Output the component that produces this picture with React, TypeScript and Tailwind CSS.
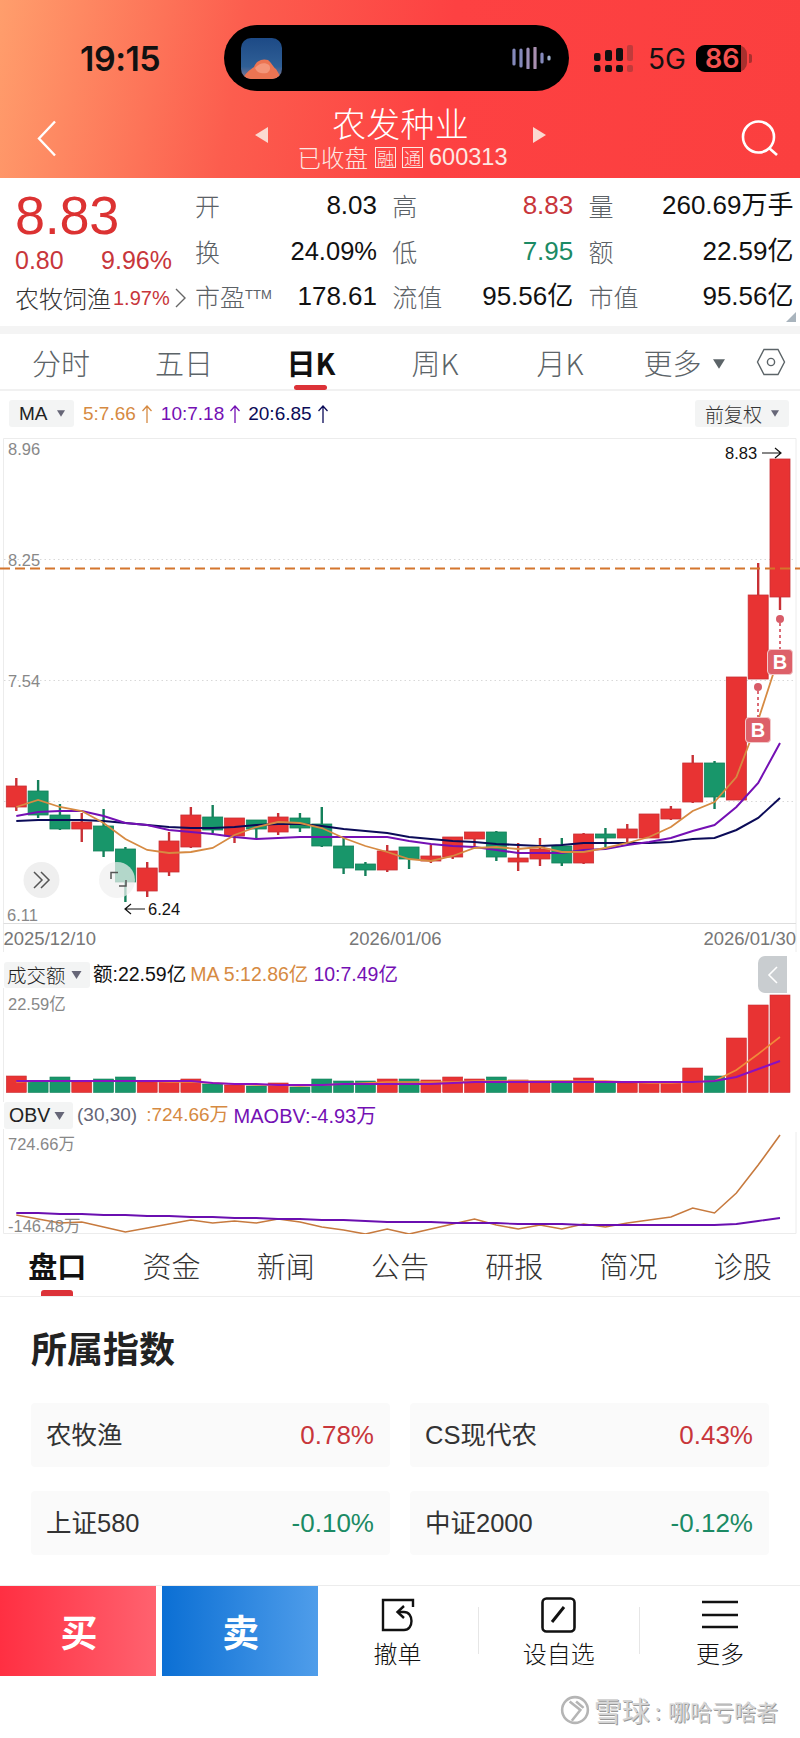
import React from 'react';

const RED = '#e83333';
const GREEN = '#18966a';
const ORANGE = '#d68a42';
const PURPLE = '#7410b4';
const NAVY = '#0b0b58';

const xAt = (i: number) => 16.3 + i * 21.82;

// r/g, body top, body bottom, wick top, wick bottom (page y)
const candles: [string, number, number, number, number][] = [
  ['r', 786, 807, 778, 811],
  ['g', 791, 815, 780, 818],
  ['g', 815, 829, 804, 830],
  ['r', 822, 829, 813, 842],
  ['g', 826, 851, 809, 857],
  ['g', 849, 882, 847, 902],
  ['r', 868, 891, 862, 897],
  ['r', 841, 872, 832, 876],
  ['r', 815, 847, 807, 848],
  ['g', 817, 830, 805, 833],
  ['r', 818, 836, 818, 843],
  ['g', 820, 829, 820, 838],
  ['r', 817, 832, 813, 835],
  ['g', 818, 828, 813, 832],
  ['g', 824, 846, 807, 847],
  ['g', 846, 868, 838, 874],
  ['g', 864, 870, 862, 876],
  ['r', 851, 870, 845, 872],
  ['g', 847, 859, 847, 869],
  ['r', 856, 861, 845, 863],
  ['r', 837, 857, 837, 859],
  ['r', 832, 839, 832, 846],
  ['g', 832, 857, 831, 861],
  ['r', 858, 862, 843, 871],
  ['r', 849, 859, 838, 866],
  ['g', 846, 863, 838, 866],
  ['r', 834, 863, 833, 864],
  ['g', 834, 838, 828, 847],
  ['r', 829, 838, 824, 842],
  ['r', 814, 838, 814, 838],
  ['r', 809, 819, 806, 820],
  ['r', 763, 802, 755, 803],
  ['g', 763, 797, 761, 809],
  ['r', 677, 800, 677, 800],
  ['r', 595, 679, 563, 679],
  ['r', 459, 597, 459, 610],
];

const ma5 = [807, 800, 807, 811, 823, 839, 850, 853, 852, 848, 835, 827, 822, 823, 828, 838, 846, 852, 859, 861, 856, 848, 847, 849, 847, 852, 852, 848, 843, 837, 827, 811, 802, 777, 720, 653];
const ma10 = [816, 812, 811, 811, 816, 823, 825, 830, 832, 834, 837, 839, 838, 837, 837, 837, 837, 837, 841, 844, 846, 847, 850, 853, 853, 853, 850, 849, 845, 842, 838, 831, 825, 807, 783, 743];
const ma20 = [821, 820, 820, 820, 821, 823, 825, 827, 828, 828, 827, 825, 824, 824, 826, 829, 831, 833, 837, 839, 841, 842, 844, 845, 846, 845, 843, 843, 843, 843, 842, 839, 838, 830, 818, 798];

const volTops = [1076, 1081, 1077, 1082, 1079, 1077, 1082, 1081, 1079, 1084, 1085, 1086, 1083, 1087, 1079, 1081, 1081, 1079, 1079, 1080, 1077, 1079, 1077, 1080, 1081, 1081, 1078, 1082, 1083, 1083, 1082, 1068, 1076, 1038, 1005, 995];
const volMa5 = [1082, 1081, 1081, 1081, 1081, 1081, 1081, 1082, 1082, 1083, 1084, 1085, 1085, 1086, 1085, 1084, 1083, 1082, 1082, 1082, 1082, 1081, 1081, 1081, 1081, 1081, 1081, 1081, 1082, 1083, 1083, 1082, 1081, 1070, 1054, 1037];
const volMa10 = [1081, 1081, 1081, 1081, 1081, 1081, 1081, 1081, 1081, 1083, 1084, 1084, 1085, 1085, 1085, 1084, 1084, 1084, 1084, 1084, 1083, 1082, 1082, 1082, 1082, 1082, 1082, 1082, 1082, 1082, 1082, 1082, 1081, 1077, 1069, 1061];

const obv = [1215, 1219, 1223, 1222, 1227, 1232, 1228, 1224, 1220, 1223, 1221, 1223, 1219, 1222, 1227, 1230, 1234, 1229, 1234, 1229, 1224, 1219, 1225, 1229, 1225, 1229, 1224, 1227, 1223, 1220, 1217, 1208, 1213, 1193, 1165, 1135];
const maObv = [1213, 1213, 1214, 1214, 1215, 1215, 1216, 1216, 1217, 1217, 1218, 1218, 1219, 1219, 1220, 1220, 1221, 1222, 1222, 1222, 1223, 1223, 1223, 1224, 1224, 1224, 1225, 1225, 1225, 1225, 1225, 1225, 1225, 1224, 1221, 1218];

const pts = (ys: number[]) => ys.map((y, i) => `${xAt(i).toFixed(1)},${y}`).join(' ');

const indexCards = [
  { name: '农牧渔', value: '0.78%', up: true },
  { name: 'CS现代农', value: '0.43%', up: true },
  { name: '上证580', value: '-0.10%', up: false },
  { name: '中证2000', value: '-0.12%', up: false },
];

function Caret({ className }: { className: string }) {
  return (
    <svg viewBox="0 0 10 8" className={className}>
      <path d="M0 0H10L5 8Z" fill="currentColor" />
    </svg>
  );
}

function UpArrow({ color }: { color: string }) {
  return (
    <svg width="12" height="18" viewBox="0 0 12 18" className="ml-[5px]" fill="none" stroke={color} strokeWidth="1.3">
      <path d="M6 1V18M1.5 6L6 1L10.5 6" />
    </svg>
  );
}

function StatusBar() {
  return (
    <div className="flex h-[91px] items-start pt-[25px]">
      <div className="ml-[80px] mt-[15px] w-[144px] text-[34px] font-semibold leading-[38px] tracking-[-0.5px] text-[#111] [font-family:Inter,sans-serif]">19:15</div>
      <div className="flex h-[66px] w-[345px] items-center rounded-[33px] bg-black pl-[17px]">
        <svg width="41" height="41" viewBox="0 0 41 41" className="rounded-[10px]">
          <defs>
            <linearGradient id="sky" x1="0" y1="0" x2="0" y2="1">
              <stop offset="0" stopColor="#1d4a86" />
              <stop offset="0.7" stopColor="#2f5f96" />
              <stop offset="1" stopColor="#8a7a90" />
            </linearGradient>
          </defs>
          <rect width="41" height="41" fill="url(#sky)" />
          <path d="M2 41C5 34 9 32 13 29C15 23 21 20 27 22C31 25 32 29 35 31C37 34 39 38 40 41Z" fill="#ec7452" />
          <path d="M14 30C18 25 24 24 28 27C30 30 29 33 26 35C21 36 16 35 14 30Z" fill="#f4967a" />
        </svg>
        <svg width="40" height="22" viewBox="0 0 40 22" className="ml-[230px]">
          <g strokeWidth="3.2" strokeLinecap="round" stroke="#8489bb">
            <path d="M2 3V17" />
            <path d="M9 3V19" />
            <path d="M16 2V21" stroke="#9c8fb8" />
            <path d="M23 1V21" stroke="#a98fb0" />
            <path d="M30 7V15" stroke="#8489bb" />
            <path d="M37 10V12" stroke="#9fb0cc" />
          </g>
        </svg>
      </div>
      <svg width="40" height="28" viewBox="0 0 40 28" className="ml-[25px] mt-[20px]">
        <g fill="#111">
          <rect x="0" y="8" width="6.5" height="8" rx="2" />
          <rect x="11" y="5" width="7" height="11" rx="2" />
          <rect x="22" y="3" width="7" height="13" rx="2" />
          <rect x="0" y="20" width="6.5" height="7" rx="2" />
          <rect x="11" y="20" width="7" height="7" rx="2" />
          <rect x="22" y="20" width="7" height="7" rx="2" />
        </g>
        <g fill="#b23a3a" opacity="0.8">
          <rect x="33" y="0" width="6" height="16" rx="2" />
          <rect x="33" y="20" width="6" height="7" rx="2" />
        </g>
      </svg>
      <div className="ml-[14px] mr-[10px] mt-[18px] whitespace-nowrap text-[28px] font-normal leading-[32px] text-[#111] [font-family:Inter,sans-serif]">5G</div>
      <div className="relative mt-[20px] flex h-[27px] w-[51px] rounded-[9px] bg-[#a8302e]">
        <div className="w-[45px] rounded-l-[9px] bg-black pl-[9px] text-[27px] font-semibold leading-[27px] text-[#f4524f] [font-family:Inter,sans-serif]">86</div>
      </div>
      <div className="ml-[2px] mt-[29px] h-[9px] w-[3px] rounded-r-[2px] bg-[#a8302e]" />
    </div>
  );
}

function NavBar() {
  return (
    <div className="flex h-[87px] items-start">
      <svg width="20" height="37" viewBox="0 0 20 37" className="ml-[37px] mt-[29px]">
        <path d="M18 1.5L2 18.5L18 35.5" fill="none" stroke="#fff" strokeWidth="2.4" />
      </svg>
      <svg width="13" height="16" viewBox="0 0 13 16" className="ml-[198px] mt-[36px]">
        <path d="M13 0V16L0 8Z" fill="#fbd9d0" />
      </svg>
      <div className="flex w-[265px] flex-col items-center pt-[13px] text-white">
        <div className="text-[34px] leading-[38px] tracking-[0.3px] [font-family:'Noto_Sans_CJK_SC',sans-serif] font-light">农发种业</div>
        <div className="ml-[4px] flex items-center text-[23.5px] leading-[30px] text-[#fde8e3]">
          <span className="[font-family:'Noto_Sans_CJK_SC',sans-serif] font-light">已收盘</span>
          <span className="ml-[7px] flex h-[21px] w-[21px] items-center justify-center border border-[#fde8e3] text-[17px] leading-none [font-family:'Noto_Sans_CJK_SC',sans-serif] font-light">融</span>
          <span className="ml-[6px] flex h-[21px] w-[21px] items-center justify-center border border-[#fde8e3] text-[17px] leading-none [font-family:'Noto_Sans_CJK_SC',sans-serif] font-light">通</span>
          <span className="ml-[6px]">600313</span>
        </div>
      </div>
      <svg width="13" height="16" viewBox="0 0 13 16" className="mt-[36px]">
        <path d="M0 0V16L13 8Z" fill="#fbd9d0" />
      </svg>
      <svg width="38" height="36" viewBox="0 0 38 36" className="ml-[195px] mt-[29px]">
        <circle cx="17.5" cy="17" r="15.5" fill="none" stroke="#fff" strokeWidth="2.6" />
        <path d="M28 28L36 35" stroke="#fff" strokeWidth="2.6" />
      </svg>
    </div>
  );
}

function QuotePair({ label, value, tone, sup }: { label: string; value: string; tone?: string; sup?: boolean }) {
  return (
    <div className="flex items-center justify-between leading-[30px]">
      <span className="text-[25px] text-[#5b6166] [font-family:'Noto_Sans_CJK_SC',sans-serif] font-light">
        {label}
        {sup && <sup className="top-[-8px] text-[13px] [font-family:'Liberation_Sans',sans-serif]">TTM</sup>}
      </span>
      <span className={tone ?? 'text-[26px] text-[#111]'}>{value}</span>
    </div>
  );
}

function Quote() {
  return (
    <div className="relative flex h-[148px] bg-white">
      <div className="w-[195px] pl-[15px] pt-[10px]">
        <div className="text-[54px] leading-[54px] tracking-[-0.3px] text-[#dc3232]">8.83</div>
        <div className="mt-[4px] flex h-[30px] w-[157px] items-center justify-between text-[25px] text-[#c8363b]">
          <span>0.80</span>
          <span>9.96%</span>
        </div>
        <div className="mt-[7px] flex h-[30px] items-center text-[24px] text-[#333]">
          <span className="[font-family:'Noto_Sans_CJK_SC',sans-serif] font-light">农牧饲渔</span>
          <span className="ml-[2px] text-[20px] text-[#c8363b]">1.97%</span>
          <svg width="11" height="22" viewBox="0 0 11 22" className="ml-[5px]">
            <path d="M1 2L10 11L1 20" fill="none" stroke="#666" strokeWidth="1.4" />
          </svg>
        </div>
      </div>
      <div className="grid grid-cols-[182px_181px_205px] auto-rows-[45.5px] items-center gap-x-[15.25px] pt-[4.5px]">
        <QuotePair label="开" value="8.03" />
        <QuotePair label="高" value="8.83" tone="text-[26px] text-[#c8363b]" />
        <QuotePair label="量" value="260.69万手" />
        <QuotePair label="换" value="24.09%" tone="text-[25.5px] text-[#111]" />
        <QuotePair label="低" value="7.95" tone="text-[26px] text-[#1b8a64]" />
        <QuotePair label="额" value="22.59亿" />
        <QuotePair label="市盈" value="178.61" sup />
        <QuotePair label="流值" value="95.56亿" />
        <QuotePair label="市值" value="95.56亿" />
      </div>
      <svg width="10" height="10" viewBox="0 0 10 10" className="absolute bottom-[4px] right-[4px]">
        <path d="M10 0V10H0Z" fill="#a9b4bd" />
      </svg>
    </div>
  );
}

function PeriodTabs() {
  const base = "flex items-center justify-center pt-[1px] text-[#5c6468] [font-family:'Noto_Sans_CJK_SC',sans-serif] font-light";
  return (
    <div className="relative grid h-[57px] grid-cols-[122px_124px_130px_118px_132px_116px_58px] border-b-2 border-[#f1f1f1] text-[29px] leading-none">
      <div className={base}>分时</div>
      <div className={base}>五日</div>
      <div className="flex items-center justify-center pt-[1px] font-bold text-[#111] [font-family:'Noto_Sans_CJK_SC',sans-serif]">日K</div>
      <div className={base}>周K</div>
      <div className={base}>月K</div>
      <div className={base}>
        更多
        <Caret className="ml-[11px] mt-[3px] h-[10px] w-[12px] text-[#5c6468]" />
      </div>
      <div className="flex items-center justify-center">
        <svg width="30" height="28" viewBox="0 0 30 28">
          <path d="M8 1.5H22L28.5 14L22 26.5H8L1.5 14Z" fill="none" stroke="#5c6468" strokeWidth="1.4" />
          <circle cx="15" cy="14" r="3.6" fill="none" stroke="#5c6468" strokeWidth="1.4" />
        </svg>
      </div>
      <div className="absolute bottom-[-1px] left-[294px] h-[5px] w-[33px] rounded-full bg-[#dc3238]" />
    </div>
  );
}

function MaBar() {
  return (
    <div className="flex h-[47px] items-start pt-[9px] text-[19px] leading-[27px]">
      <div className="ml-[9px] flex h-[27px] w-[65px] items-center rounded-[3px] bg-[#f3f4f4] pl-[10px] text-[#222]">
        MA
        <Caret className="ml-[9px] h-[7px] w-[8px] text-[#667]" />
      </div>
      <div className="ml-[9px] flex h-[27px] items-center text-[#d68a42]">
        5:7.66
        <UpArrow color={ORANGE} />
      </div>
      <div className="ml-[8px] flex h-[27px] items-center text-[#7410b4]">
        10:7.18
        <UpArrow color={PURPLE} />
      </div>
      <div className="ml-[7px] flex h-[27px] items-center text-[#0b0b58]">
        20:6.85
        <UpArrow color={NAVY} />
      </div>
      <div className="ml-auto mr-[11px] flex h-[27px] w-[94px] items-center rounded-[3px] bg-[#f3f4f4] pl-[10px] text-[#333]">
        <span className="[font-family:'Noto_Sans_CJK_SC',sans-serif] font-light">前复权</span>
        <Caret className="ml-[9px] h-[7px] w-[8px] text-[#667]" />
      </div>
    </div>
  );
}

function TradeBadge({ className }: { className: string }) {
  return (
    <div className={`absolute flex h-[26px] w-[26px] items-center justify-center rounded-[4px] border border-[#f3c9cb] bg-[#dd6069] text-[20px] font-bold leading-none text-white ${className}`}>
      B
    </div>
  );
}

function MainChart() {
  return (
    <div className="relative h-[514px] text-[16.5px] leading-[20px]">
      <svg width="800" height="514" viewBox="0 438 800 514" className="block">
        <path d="M3.5 952.5V438.5H796V952.5H3.5" fill="none" stroke="#ececec" />
        <path d="M3.5 923.5H796" stroke="#dedede" />
        {[559.5, 680.5, 801.5].map((y) => (
          <path key={y} d={`M4 ${y}H796`} stroke="#d8d8d8" strokeDasharray="1.5 3" />
        ))}
        {candles.map(([c, top, bottom, wickTop, wickBottom], i) => {
          const x = xAt(i);
          const fill = c === 'r' ? RED : GREEN;
          const dark = c === 'r' ? '#c83035' : '#14805a';
          return (
            <g key={i}>
              <path d={`M${x} ${wickTop}V${wickBottom}`} stroke={dark} strokeWidth="2.4" />
              <rect x={x - 10} y={top} width="20" height={bottom - top} fill={fill} stroke={dark} strokeWidth="0.8" />
            </g>
          );
        })}
        <path d="M0 568.5H800" stroke="#d4752c" strokeWidth="2" strokeDasharray="10 5" />
        <polyline points={pts(ma20)} fill="none" stroke={NAVY} strokeWidth="2" />
        <polyline points={pts(ma10)} fill="none" stroke={PURPLE} strokeWidth="2" />
        <polyline points={pts(ma5)} fill="none" stroke={ORANGE} strokeWidth="1.8" />
        <path d="M780 623V649M758 691V717" stroke="#d85c68" strokeWidth="1.8" strokeDasharray="3 3" />
        <circle cx="780" cy="619" r="4" fill="#d85c68" />
        <circle cx="758" cy="687" r="4" fill="#d85c68" />
        <path d="M762 453H781M775 448L781 453L775 458" fill="none" stroke="#111" strokeWidth="1.2" />
        <path d="M145 909H125M131 904L125 909L131 914" fill="none" stroke="#111" strokeWidth="1.2" />
        <circle cx="41.5" cy="880" r="18" fill="#efefef" />
        <path d="M34 872L42 880L34 888M41 872L49 880L41 888" fill="none" stroke="#555" strokeWidth="1.5" />
        <circle cx="117" cy="880" r="18" fill="#f0f0f0" fillOpacity="0.72" />
        <path d="M111 879V872.5H118M126 880V886H119" fill="none" stroke="#555" strokeWidth="1.5" />
      </svg>
      <TradeBadge className="left-[767px] top-[211px]" />
      <TradeBadge className="left-[745px] top-[279px]" />
      <div className="absolute left-[8px] top-[1px] text-[#888]">8.96</div>
      <div className="absolute left-[8px] top-[112px] text-[#888]">8.25</div>
      <div className="absolute left-[8px] top-[233px] text-[#888]">7.54</div>
      <div className="absolute left-[7px] top-[467px] text-[#888]">6.11</div>
      <div className="absolute left-[725px] top-[5px] text-[#111]">8.83</div>
      <div className="absolute left-[148px] top-[461px] text-[#111]">6.24</div>
      <div className="absolute left-[3.5px] top-[491px] text-[18.5px] text-[#777]">2025/12/10</div>
      <div className="absolute left-[349px] top-[491px] text-[18.5px] text-[#777]">2026/01/06</div>
      <div className="absolute right-[4px] top-[491px] text-[18.5px] text-[#777]">2026/01/30</div>
    </div>
  );
}

function VolumePanel() {
  return (
    <div className="relative h-[150px] pt-[10px]">
      <div className="flex h-[26px] items-center text-[19.5px]">
        <div className="ml-[4px] flex h-[26px] w-[86px] items-center rounded-[3px] bg-[#f3f4f4] pl-[3px] text-[#222]">
          <span className="[font-family:'Noto_Sans_CJK_SC',sans-serif] font-light">成交额</span>
          <Caret className="ml-[5px] h-[8px] w-[11px] text-[#667]" />
        </div>
        <span className="ml-[3px] text-[#111]">额:22.59亿</span>
        <span className="ml-[4px] text-[#d68a42]">MA 5:12.86亿</span>
        <span className="ml-[5px] text-[#7410b4]">10:7.49亿</span>
      </div>
      <svg width="800" height="114" viewBox="0 988 800 114" className="block">
        <path d="M3.5 988V1102" stroke="#ececec" />
        {volTops.map((top, i) => (
          <rect key={i} x={xAt(i) - 10} y={top} width="20" height={1092.5 - top} fill={candles[i][0] === 'r' ? RED : GREEN} stroke={candles[i][0] === 'r' ? '#c83035' : '#14805a'} strokeWidth="0.6" />
        ))}
        <polyline points={pts(volMa5)} fill="none" stroke="#f08a3a" strokeWidth="1.6" />
        <polyline points={pts(volMa10)} fill="none" stroke="#8a10c0" strokeWidth="2" />
      </svg>
      <div className="absolute left-[8px] top-[42px] text-[16.5px] leading-[20px] text-[#888]">22.59亿</div>
      <div className="absolute left-[758px] top-[4px] flex h-[37px] w-[29px] items-center justify-center rounded-l-[7px] bg-[#c9cdd0]">
        <svg width="12" height="20" viewBox="0 0 12 20">
          <path d="M10 2L2 10L10 18" fill="none" stroke="#fff" strokeWidth="1.6" />
        </svg>
      </div>
    </div>
  );
}

function ObvPanel() {
  return (
    <div className="relative h-[132px]">
      <div className="flex h-[27px] items-center text-[19px]">
        <div className="ml-[4px] flex h-[27px] w-[69px] items-center rounded-[3px] bg-[#f3f4f4] pl-[5px] text-[19.5px] text-[#222]">
          OBV
          <Caret className="ml-[4px] h-[8px] w-[11px] text-[#667]" />
        </div>
        <span className="ml-[4px] text-[#667]">(30,30)</span>
        <span className="ml-[9px] text-[#d68a42]">:724.66万</span>
        <span className="ml-[5px] text-[20px] text-[#7410b4]">MAOBV:-4.93万</span>
      </div>
      <svg width="800" height="105" viewBox="0 1129 800 105" className="block">
        <path d="M3.5 1129V1233.5H796V1132" fill="none" stroke="#ececec" />
        <polyline points={pts(obv)} fill="none" stroke="#c77a3e" strokeWidth="1.6" />
        <polyline points={pts(maObv)} fill="none" stroke="#6a0fb0" strokeWidth="1.8" />
      </svg>
      <div className="absolute left-[8px] top-[32px] text-[16.5px] leading-[20px] text-[#888]">724.66万</div>
      <div className="absolute left-[8px] top-[114px] text-[16.5px] leading-[20px] text-[#888]">-146.48万</div>
    </div>
  );
}

function InfoTabs() {
  const tabs = ['盘口', '资金', '新闻', '公告', '研报', '简况', '诊股'];
  return (
    <div className="relative grid h-[63px] grid-cols-7 border-b border-[#eeeeee] text-[29px] [font-family:'Noto_Sans_CJK_SC',sans-serif]">
      {tabs.map((t, i) => (
        <div key={t} className={i === 0 ? 'flex items-center justify-center pt-[1px] font-bold text-[#111]' : 'flex items-center justify-center pt-[1px] font-light text-[#333]'}>
          {t}
        </div>
      ))}
      <div className="absolute bottom-0 left-[41px] h-[6px] w-[32px] rounded-t-[3px] bg-[#dc3238]" />
    </div>
  );
}

function IndexSection() {
  return (
    <div className="h-[288px] px-[31px]">
      <div className="pt-[26px] text-[36px] font-bold leading-[48px] text-[#222] [font-family:'Noto_Sans_CJK_SC',sans-serif]">所属指数</div>
      <div className="mt-[32px] grid grid-cols-[359px_359px] auto-rows-[64px] gap-x-[20px] gap-y-[24px]">
        {indexCards.map((c) => (
          <div key={c.name} className="flex items-center justify-between rounded-[4px] bg-[#fafafa] pl-[15px] pr-[16px]">
            <span className="text-[25.5px] text-[#333] [font-family:'Liberation_Sans','Noto_Sans_CJK_SC',sans-serif]">{c.name}</span>
            <span className={c.up ? 'text-[26px] text-[#c8363b]' : 'text-[26px] text-[#1b8a64]'}>{c.value}</span>
          </div>
        ))}
      </div>
    </div>
  );
}

function ToolButton({ label, children }: { label: string; children: React.ReactNode }) {
  return (
    <div className="flex flex-1 flex-col items-center pt-[11px]">
      <div className="flex h-[36px] items-center">{children}</div>
      <div className="mt-[5px] text-[24px] leading-[30px] text-[#111] [font-family:'Noto_Sans_CJK_SC',sans-serif] font-light">{label}</div>
    </div>
  );
}

function BottomBar() {
  return (
    <div className="flex h-[91px] border-t border-[#ececec]">
      <div className="flex w-[156px] items-center justify-center bg-[linear-gradient(90deg,#ff2f42,#ff626f)] pl-[2px] pt-[2px] text-[37px] font-bold text-white [font-family:'Noto_Sans_CJK_SC',sans-serif]">买</div>
      <div className="ml-[6px] flex w-[155.5px] items-center justify-center bg-[linear-gradient(90deg,#0b6fd4,#4f9dea)] pl-[2px] pt-[2px] text-[37px] font-bold text-white [font-family:'Noto_Sans_CJK_SC',sans-serif]">卖</div>
      <ToolButton label="撤单">
        <svg width="34" height="34" viewBox="0 0 34 34" fill="none" stroke="#111" strokeWidth="2.4">
          <path d="M32 9V2H2V32H23" />
          <path d="M17 14H23C33 14 33 32 23 32" />
          <path d="M23 8L16.5 14L23 20" />
        </svg>
      </ToolButton>
      <div className="mt-[21px] h-[47px] w-px bg-[#e6e6e6]" />
      <ToolButton label="设自选">
        <svg width="35" height="36" viewBox="0 0 35 36" fill="none" stroke="#111">
          <rect x="1.5" y="1.5" width="32" height="33" rx="4" strokeWidth="2.6" />
          <path d="M11 25L23 10" strokeWidth="3" />
        </svg>
      </ToolButton>
      <div className="mt-[21px] h-[47px] w-px bg-[#e6e6e6]" />
      <ToolButton label="更多">
        <svg width="36" height="30" viewBox="0 0 36 30" stroke="#111" strokeWidth="2.6">
          <path d="M0 2H36M0 15H36M0 27H36" />
        </svg>
      </ToolButton>
    </div>
  );
}

function Watermark() {
  return (
    <div className="flex h-[62px] items-center justify-end pr-[22px] pt-[5px] text-[#d4d4d4] [text-shadow:1px_1px_0_#999999] [font-family:'Noto_Sans_CJK_SC',sans-serif]">
      <svg width="30" height="30" viewBox="0 0 28 28" fill="none" stroke="#b5b5b5" strokeWidth="2.4" className="mr-[4px]">
        <circle cx="14" cy="14" r="12" />
        <path d="M9 6L19 14L11 24M15 6L22 12" />
      </svg>
      <span className="text-[28px] leading-[32px]">雪球</span>
      <span className="ml-[5px] mr-[7px] text-[22px] leading-[32px]">:</span>
      <span className="text-[22px] leading-[32px]">哪哈亏啥者</span>
    </div>
  );
}

export default function App() {
  return (
    <div className="w-[800px] overflow-hidden bg-white [font-family:'Liberation_Sans','Noto_Sans_CJK_SC',sans-serif]">
      <div className="h-[178px] bg-[linear-gradient(100deg,#ff9e6c_0%,#fc5d4e_30%,#fd4142_55%,#fb3f3f_100%)]">
        <StatusBar />
        <NavBar />
      </div>
      <Quote />
      <div className="h-[8px] bg-[#f4f4f4]" />
      <PeriodTabs />
      <MaBar />
      <MainChart />
      <VolumePanel />
      <ObvPanel />
      <InfoTabs />
      <IndexSection />
      <BottomBar />
      <Watermark />
    </div>
  );
}
